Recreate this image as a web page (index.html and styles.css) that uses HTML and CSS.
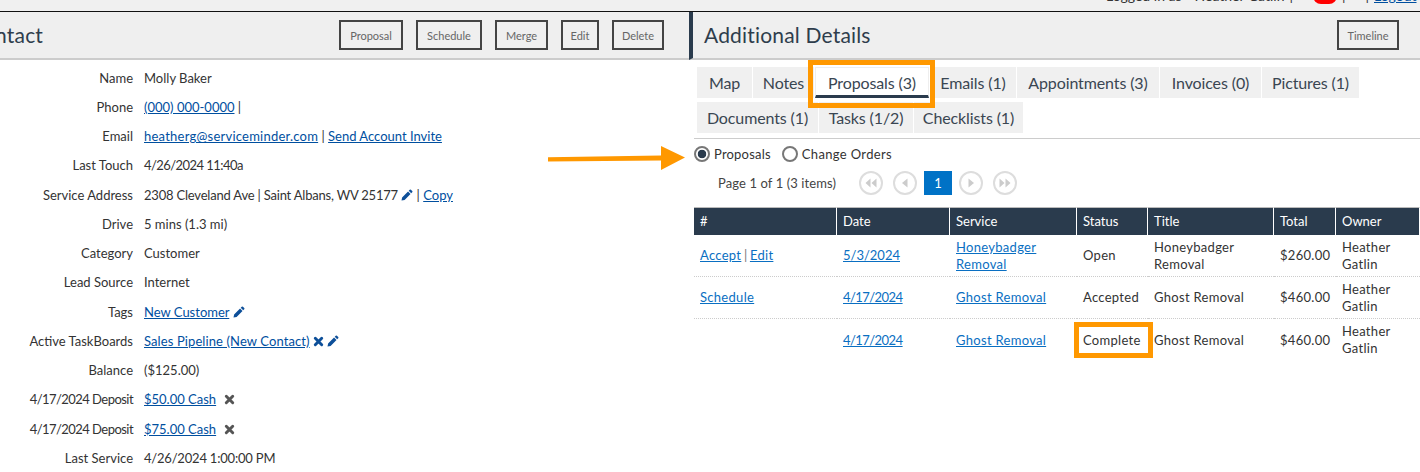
FILE: index.html
```html
<!DOCTYPE html>
<html lang="en">
<head>
<meta charset="utf-8">
<title>Contact</title>
<link rel="stylesheet" href="styles.css">
</head>
<body>
<svg class="defs" width="0" height="0" aria-hidden="true">
  <symbol id="pencil" viewBox="0 0 14 14"><path d="M10.200.9a1 1 0 0 1 1.400 0l1.500 1.500a1 1 0 0 1 0 1.400l-1.200 1.200L9 2.100zM8.200 2.900l2.900 2.900-6.900 6.900L.6 13.400l.7-3.600z"/></symbol>
  <symbol id="cross" viewBox="0 0 12 12"><path d="M2.500 2.500l7 7M9.500 2.500l-7 7" fill="none" stroke="currentColor" stroke-width="3.200" stroke-linecap="round"/></symbol>
</svg>
<header class="topbar">
  <span class="top-item top-user">Logged in as</span>
  <span class="top-item top-name">Heather Gatlin</span>
  <span class="top-item">|</span>
  <span class="top-dot"></span>
  <span class="top-pill"></span>
  <span class="top-item">|</span>
  <span class="top-dot"></span>
  <span class="top-item">|</span>
  <a class="top-link" href="#">Logout</a>
</header>
<main class="columns">
  <section class="panel-left">
    <div class="head head-left">
      <h1 class="title title-left">Contact</h1>
      <div class="actions">
        <button class="btn b-prop">Proposal</button>
        <button class="btn b-sched">Schedule</button>
        <button class="btn b-merge">Merge</button>
        <button class="btn b-edit">Edit</button>
        <button class="btn b-del">Delete</button>
      </div>
    </div>
    <dl class="fields">
      <div class="field"><dt>Name</dt><dd>Molly Baker</dd></div>
      <div class="field"><dt>Phone</dt><dd><a href="#">(000) 000-0000</a> |</dd></div>
      <div class="field"><dt>Email</dt><dd><a class="wide" href="#">heatherg@serviceminder.com</a> | <a href="#">Send Account Invite</a></dd></div>
      <div class="field"><dt>Last Touch</dt><dd class="digits">4/26/2024 11:40a</dd></div>
      <div class="field"><dt>Service Address</dt><dd><span class="tight">2308 Cleveland Ave | Saint Albans, WV 25177</span> <svg class="ico ico-blue"><use href="#pencil"/></svg> | <a href="#">Copy</a></dd></div>
      <div class="field"><dt>Drive</dt><dd>5 mins (1.3 mi)</dd></div>
      <div class="field"><dt>Category</dt><dd>Customer</dd></div>
      <div class="field"><dt>Lead Source</dt><dd>Internet</dd></div>
      <div class="field"><dt>Tags</dt><dd><a href="#">New Customer</a> <svg class="ico ico-blue"><use href="#pencil"/></svg></dd></div>
      <div class="field"><dt>Active TaskBoards</dt><dd><a class="slight" href="#">Sales Pipeline (New Contact)</a> <svg class="ico ico-blue ico-x"><use href="#cross"/></svg> <svg class="ico ico-blue"><use href="#pencil"/></svg></dd></div>
      <div class="field"><dt>Balance</dt><dd>($125.00)</dd></div>
      <div class="field"><dt class="digits">4/17/2024 Deposit</dt><dd><a href="#">$50.00 Cash</a> <svg class="ico ico-gray ico-x"><use href="#cross"/></svg></dd></div>
      <div class="field"><dt class="digits">4/17/2024 Deposit</dt><dd><a href="#">$75.00 Cash</a> <svg class="ico ico-gray ico-x"><use href="#cross"/></svg></dd></div>
      <div class="field"><dt>Last Service</dt><dd class="tight">4/26/2024 1:00:00 PM</dd></div>
    </dl>
  </section>
  <section class="panel-right">
    <div class="head head-right">
      <h2 class="title">Additional Details</h2>
      <button class="btn b-time">Timeline</button>
    </div>
    <nav class="tabs">
      <span class="tab t-map">Map</span>
      <span class="tab t-notes">Notes</span>
      <span class="tab tab-active t-prop">Proposals (3)</span>
      <span class="tab t-emails">Emails (1)</span>
      <span class="tab t-appt">Appointments (3)</span>
      <span class="tab t-inv">Invoices (0)</span>
      <span class="tab t-pic">Pictures (1)</span>
      <span class="tab t-doc">Documents (1)</span>
      <span class="tab t-task">Tasks (1/2)</span>
      <span class="tab t-check">Checklists (1)</span>
    </nav>
    <div class="radios">
      <label class="radio"><span class="radio-dot radio-on"></span>Proposals</label>
      <label class="radio radio-wide"><span class="radio-dot"></span>Change Orders</label>
    </div>
    <div class="pager">
      <span class="pager-info">Page 1 of 1 (3 items)</span>
      <span class="pg"><svg viewBox="0 0 20 20"><path d="M9.500 5.500v9L4.500 10zM15.500 5.500v9l-5-4.500z"/></svg></span>
      <span class="pg"><svg viewBox="0 0 20 20"><path d="M12.500 5.500v9L7 10z"/></svg></span>
      <span class="pg-current">1</span>
      <span class="pg"><svg viewBox="0 0 20 20"><path d="M7.500 5.500v9L13 10z"/></svg></span>
      <span class="pg"><svg viewBox="0 0 20 20"><path d="M4.500 5.500v9l5-4.500zM10.500 5.500v9l5-4.500z"/></svg></span>
    </div>
    <table class="grid">
      <colgroup>
        <col class="c1"><col class="c2"><col class="c3"><col class="c4"><col class="c5"><col class="c6"><col class="c7">
      </colgroup>
      <thead>
        <tr><th>#</th><th>Date</th><th>Service</th><th>Status</th><th>Title</th><th>Total</th><th>Owner</th></tr>
      </thead>
      <tbody>
        <tr><td><a href="#">Accept</a> <span class="sep">|</span> <a href="#">Edit</a></td><td><a class="plain" href="#">5/3/2024</a></td><td><a href="#">Honeybadger Removal</a></td><td>Open</td><td>Honeybadger Removal</td><td>$260.00</td><td>Heather Gatlin</td></tr>
        <tr><td><a href="#">Schedule</a></td><td><a class="digits" href="#">4/17/2024</a></td><td><a href="#">Ghost Removal</a></td><td>Accepted</td><td>Ghost Removal</td><td>$460.00</td><td>Heather Gatlin</td></tr>
        <tr><td></td><td><a class="digits" href="#">4/17/2024</a></td><td><a href="#">Ghost Removal</a></td><td>Complete</td><td>Ghost Removal</td><td>$460.00</td><td>Heather Gatlin</td></tr>
      </tbody>
    </table>
  </section>
</main>
<div class="mark mark-tab"></div>
<div class="mark mark-status"></div>
<svg class="arrow" width="140" height="26" viewBox="0 0 140 26" aria-hidden="true">
  <path d="M0 12.200L113 10.600V1L137 12.500 113 25V15.400L0 16.600z" fill="#ff9800"/>
</svg>
</body>
</html>
```
FILE: styles.css
```css
* { box-sizing: border-box; }
html, body { margin: 0; padding: 0; }
body {
  width: 1420px;
  height: 472px;
  overflow: hidden;
  position: relative;
  background: #fff;
  color: #333;
  font-family: "Lato", "Liberation Sans", sans-serif;
  font-size: 13px;
}
.defs { position: absolute; }
a { color: #004f9f; text-decoration: underline; }

.digits { letter-spacing: -.55px; }
.tight { letter-spacing: -.2px; }
.wide { letter-spacing: .23px; }
.slight { letter-spacing: .1px; }

.topbar {
  height: 12px;
  background: #f0f0f0;
  border-bottom: 1px solid #111;
  display: flex;
  justify-content: flex-end;
  align-items: flex-end;
  gap: 5px;
  padding-bottom: 8px;
  overflow: hidden;
  font-size: 14px;
  line-height: 14px;
}
.top-item, .top-link { flex: none; }
.top-user { margin-right: 8px; }
.top-dot { width: 6px; height: 6px; border-radius: 50%; background: #1b5ea8; flex: none; margin: 0 2px 6px; }
.top-pill { width: 24px; height: 16px; border-radius: 8px; background: #f00; flex: none; margin-bottom: -1px; }
.top-link { color: #004f9f; width: 46px; white-space: nowrap; }

.columns { display: grid; grid-template-columns: 689px 731px; }
.head {
  height: 48px;
  background: #efefef;
  border-bottom: 2px solid #ccc;
  display: flex;
  align-items: center;
  justify-content: space-between;
}
.head-left { padding-right: 25px; }
.head-right { border-left: 4px solid #2a3b4d; padding: 0 21px 0 11px; }
.title { margin: 0 0 2px; font-size: 21px; font-weight: 400; color: #2e3d4c; letter-spacing: .18px; }
.title-left { margin-left: -31px; }
.actions { display: flex; gap: 13px; }
.btn {
  height: 30px;
  padding: 0;
  background: transparent;
  border: 2px solid #444;
  color: #666;
  font: 11px "Lato", "Liberation Sans", sans-serif;
}
.b-prop { width: 64px; }
.b-sched { width: 66px; }
.b-merge { width: 53px; }
.b-edit { width: 38px; }
.b-del { width: 52px; }
.b-time { width: 62px; }

.fields { margin: 3px 0 0; padding: 0; }
.field { display: flex; align-items: center; height: 29.25px; gap: 11px; }
.field dt { width: 133px; text-align: right; flex: none; white-space: nowrap; }
.field dd { margin: 0; white-space: nowrap; }
.ico { display: inline-block; width: 12px; height: 12px; vertical-align: -1px; fill: currentColor; }
.ico-x { width: 11px; height: 11px; }
.ico-blue { color: #0d4f99; }
.ico-gray { color: #555; margin-left: 5px; }

.panel-right { position: relative; }
.tabs {
  display: flex;
  flex-wrap: wrap;
  gap: 4px 1px;
  align-content: flex-start;
  width: 670px;
  height: 71px;
  margin: 7px 0 0 8px;
  font-size: 16px;
  letter-spacing: -.12px;
}
.tab {
  height: 31px;
  line-height: 31px;
  background: #f0f0f0;
  color: #3a4652;
  text-align: center;
}
.tab-active { background: #fff; border: 1px solid #eee; border-bottom: 3px solid #2a3b4d; line-height: 29px; }
.t-map { width: 55px; }
.t-notes { width: 61px; }
.t-prop { width: 114px; }
.t-emails { width: 86px; }
.t-appt { width: 142px; }
.t-inv { width: 101px; }
.t-pic { width: 97px; }
.t-doc { width: 121px; }
.t-task { width: 94px; }
.t-check { width: 109px; }

.radios {
  margin-left: 5px;
  border-top: 1px solid #ccc;
  display: flex;
  gap: 11px;
  height: 33px;
  padding-top: 7px;
}
.radio { display: flex; align-items: center; gap: 4px; height: 16px; color: #333; letter-spacing: .2px; }
.radio-wide { letter-spacing: .35px; }
.radio-dot { width: 16px; height: 16px; border: 2px solid #777; border-radius: 50%; background: #fff; flex: none; }
.radio-on { background: radial-gradient(circle, #2a3b4d 0 4px, #fff 4.600px); }

.pager { display: flex; align-items: center; height: 24px; margin-left: 29px; gap: 10px; }
.pager-info { width: 131px; color: #444; letter-spacing: .1px; }
.pg { width: 24px; height: 24px; border: 2px solid #ddd; border-radius: 50%; flex: none; display: flex; }
.pg svg { width: 20px; height: 20px; fill: #ccc; }
.pg-current { width: 28px; height: 24px; background: #0072c6; color: #fff; text-align: center; line-height: 24px; flex: none; margin: 0 -3px; }

.grid {
  margin: 12px 0 0 5px;
  width: 726px;
  table-layout: fixed;
  border-collapse: separate;
  border-spacing: 0;
}
.c1 { width: 143px; } .c2 { width: 113px; } .c3 { width: 127px; } .c4 { width: 71px; }
.c5 { width: 126px; } .c6 { width: 62px; } .c7 { width: 84px; }
.grid th {
  height: 28px;
  background: #2a3b4d;
  color: #fff;
  font-weight: 400;
  text-align: left;
  padding: 0 6px 2px;
  border-top: 1px solid #bbb;
  border-right: 1px solid #fff;
}
.grid td {
  height: 42px;
  padding: 0 6px;
  line-height: 17px;
  letter-spacing: .3px;
  border-bottom: 1px dotted #ccc;
}
.grid tr:last-child td { border-bottom: 0; }
.grid a { color: #0a6fc2; }
.grid .digits { letter-spacing: -.55px; }
.grid .plain { letter-spacing: 0; }
.sep { letter-spacing: 0; color: #777; margin: 0 -1px; }

.mark { position: absolute; border: 5px solid #ff9800; }
.mark-tab { left: 808px; top: 60px; width: 127px; height: 48px; }
.mark-status { left: 1074px; top: 322px; width: 79px; height: 36px; }
.arrow { position: absolute; left: 548px; top: 145px; }
```
